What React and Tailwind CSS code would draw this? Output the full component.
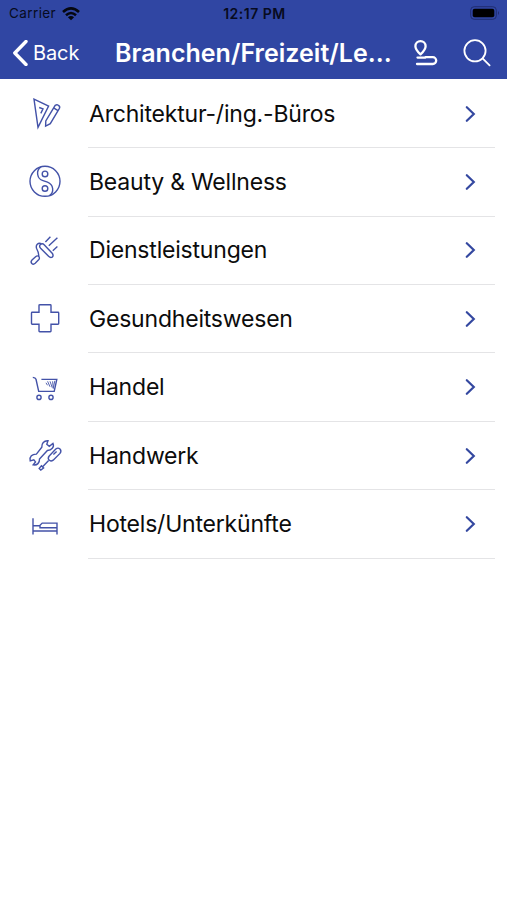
const TriangleIcon = () => (
  <svg viewBox="0 -0.9 60 50" className="w-[60px] h-[50px]">
    <path d="M14 9.2 L28.6 16.2 L18 37.5 Z" />
    <path d="M19.2 17.6 L23 19 L20.8 23.5" />
    <path d="M35.2 15.4 Q37 14.4 38.4 15.4 Q40.4 16.6 39.4 18.4 L30.3 33.8 L25.6 36.2 L25.8 31 Z M33.6 18 L38 20.8" />
  </svg>
);

const YinYangIcon = () => (
  <svg viewBox="0 -0.5 60 50" className="w-[60px] h-[50px]">
    <circle cx="25" cy="23.8" r="15" />
    <circle cx="25" cy="16.4" r="2.8" />
    <circle cx="25" cy="31" r="2.8" />
    <path d="M21 9.4 C15.5 13 17 21.5 23 23.2 L27.5 24.6 C33.5 27 34.5 34.5 29.5 38.1" />
  </svg>
);

const ShowerIcon = () => (
  <svg viewBox="0 -0.1 60 50" className="w-[60px] h-[50px]">
    <path d="M20.4 18.4 Q22.4 16.8 24.4 18.8 L32.4 27.4 Q33.8 29.6 32.2 31 Q30.4 32 28.6 30.2 L20.6 22.2 Q18.8 20.2 20.4 18.4 Z" />
    <path d="M21.4 17.6 C18 16.2 15.4 19 16.6 22.4 C18.2 25.4 19.2 27.4 18.6 30.2" />
    <path d="M18.5 30.2 Q20.3 31.8 18.6 33.7 L15.2 37.2 Q13.4 38.8 11.8 37.4 Q10.3 35.8 12 33.9 L15.6 30.6 Q17.2 29.2 18.5 30.2 Z" />
    <path d="M25.4 15.8 L30.4 10.6 M28.8 19.6 L37.4 11.6 M32.8 24.6 L37.4 20.4" />
  </svg>
);

const CrossIcon = () => (
  <svg viewBox="0 0.3 60 50" className="w-[60px] h-[50px]">
    <path d="M19.5 11 H30.3 Q31 11 31 11.7 V18.6 H38 Q38.7 18.6 38.7 19.3 V29.8 Q38.7 30.5 38 30.5 H31 V37.3 Q31 38 30.3 38 H19.7 Q19 38 19 37.3 V30.5 H12.2 Q11.5 30.5 11.5 29.8 V19.3 Q11.5 18.6 12.2 18.6 H19 V11.7 Q19 11 19.7 11 Z" />
  </svg>
);

const CartIcon = () => (
  <svg viewBox="0 0.2 60 50" className="w-[60px] h-[50px]">
    <path d="M12.8 14.6 Q15.5 14.8 16 16.5 L18.7 28.6 H34.2 L36.8 16.6 H21.4" />
    <circle cx="19" cy="34.6" r="2.1" />
    <circle cx="31" cy="34.6" r="2.1" />
    <path className="stroke-[0.9]" d="M26 20 L27.5 22.5 M27.6 18.5 L30 24 M30 18.5 L32.3 25 M32.6 18.5 L33.2 24.5 M34.8 18 L33.2 26" />
  </svg>
);

const ToolsIcon = () => (
  <svg viewBox="0 1 60 50" className="w-[60px] h-[50px]">
    <path d="M21.8 17.2 C21.6 13.6 23.8 10.4 28 10.7 L26.8 14.3 L29.3 16.3 L33 13.4 C34.6 17.2 31.4 20.2 27.4 20.5 L19.5 29 C19.7 32.8 17.2 35.6 13.2 34.8 L15.5 31.9 L13.8 29.8 L10.2 30.8 C9.2 26.6 12.2 24 16.4 24.1 Z" />
    <path d="M29.2 26 L35.8 19 Q38 17.3 40 19 Q41.8 21 40 23.4 L33.2 30.2 Q30.8 31.8 29 30.1 Q27.4 28.3 29.2 26 Z M33.4 24.4 L36.6 21.4" />
    <path d="M28.6 30.4 L22.4 37 M21.4 35.8 L23.6 38 L20.8 40 L19.2 38.4 Z" />
  </svg>
);

const BedIcon = () => (
  <svg viewBox="0 1 60 50" className="w-[60px] h-[50px]">
    <path d="M13 20.2 V36.5 M13 33 H37.3 M37 36.5 V25.1 H22.2 L20 27.2 V29.8 H37 M13 27.8 H20" />
  </svg>
);

const categories = [
  { label: 'Architektur-/ing.-Büros', icon: TriangleIcon },
  { label: 'Beauty & Wellness', icon: YinYangIcon },
  { label: 'Dienstleistungen', icon: ShowerIcon },
  { label: 'Gesundheitswesen', icon: CrossIcon },
  { label: 'Handel', icon: CartIcon },
  { label: 'Handwerk', icon: ToolsIcon },
  { label: 'Hotels/Unterkünfte', icon: BedIcon },
];

const StatusBar = () => (
  <div className="grid grid-cols-3 items-center h-[27px] pl-[9px] pr-[7px] text-[13.5px] text-[#070b20]">
    <div className="flex items-center gap-[6px]">
      <span className="tracking-[0.4px]">Carrier</span>
      <svg viewBox="0 0 18 14" className="w-[18px] h-[14px] fill-none stroke-[#05070f] stroke-[2.6]">
        <path d="M1 5 Q9 -2.2 17 5 M4 8.2 Q9 3.8 14 8.2" />
        <path d="M9 13.2 L5.9 10.2 Q9 7.8 12.1 10.2 Z" className="fill-[#05070f] stroke-none" />
      </svg>
    </div>
    <span className="text-center text-[14px] font-semibold tracking-[0.5px] whitespace-nowrap">12:17 PM</span>
    <svg viewBox="0 0 30 15" className="justify-self-end w-[30px] h-[15px]">
      <rect x="0.7" y="0.7" width="25.6" height="12.6" rx="3.5" className="fill-none stroke-[#202d70]" />
      <rect x="2.7" y="2.7" width="21.6" height="8.6" rx="2" className="fill-black" />
      <path d="M28 5 Q30 7 28 9 Z" className="fill-[#202d70]" />
    </svg>
  </div>
);

const NavBar = () => (
  <div className="flex items-center h-[52px] pl-[12px] pr-[16px] text-white">
    <button className="flex items-center gap-[5px] w-[103px]">
      <svg viewBox="0 0 16 26" className="w-[16px] h-[26px] fill-none stroke-white stroke-[3.4]">
        <path d="M14 1.5 L2.8 13 L14 24.5" strokeLinecap="round" strokeLinejoin="round" />
      </svg>
      <span className="text-[20px] tracking-[-0.1px]">Back</span>
    </button>
    <h1 className="w-[280px] text-[25px] leading-[30px] font-semibold tracking-[0.02px] whitespace-nowrap">Branchen/Freizeit/Le...</h1>
    <svg viewBox="0 0 26 28" className="ml-[18px] w-[26px] h-[28px] fill-none stroke-white stroke-[2.3]">
      <path d="M7.5 15.3 Q2.4 10.7 2.4 7.2 A5.1 5.1 0 0 1 12.6 7.2 Q12.6 10.7 7.5 15.3 Z" strokeLinejoin="round" />
      <path d="M12.5 18.2 H19.8 A3.4 3.4 0 0 1 19.8 25 H4 M4.5 18.6 H12.5" strokeLinecap="round" />
    </svg>
    <svg viewBox="0 0 28 28" className="ml-auto w-[28px] h-[28px] fill-none stroke-white stroke-[1.8]">
      <circle cx="12" cy="11.8" r="10.6" />
      <path d="M19.6 19.4 L26.6 26.4" strokeLinecap="round" />
    </svg>
  </div>
);

const CategoryRow = ({ label, icon: Icon }) => (
  <li className="flex h-[68.4px] pl-5 pr-[12px]">
    <div className="flex items-center w-[68px] fill-none stroke-[#4352a8] stroke-[1.4]">
      <Icon />
    </div>
    <div className="flex flex-1 items-center justify-between border-b border-[#e4e4e6] pr-[18px]">
      <span className="pl-px text-[23px] leading-7 tracking-[-0.2px] whitespace-nowrap">{label}</span>
      <svg viewBox="0 0 12 18" className="w-[12px] h-[18px] fill-none stroke-[#3448a0] stroke-[2.2]">
        <path d="M1.8 2.2 L8.8 9 L1.8 15.8" strokeLinecap="round" />
      </svg>
    </div>
  </li>
);

export default function App() {
  return (
    <div className="min-h-screen bg-white text-[#0c0c0c] font-[Inter,'Liberation_Sans',sans-serif]">
      <header className="h-[79px] bg-[#3046a3]">
        <StatusBar />
        <NavBar />
      </header>
      <ul className="pt-[0.9px]">
        {categories.map((item) => (
          <CategoryRow key={item.label} {...item} />
        ))}
      </ul>
    </div>
  );
}
